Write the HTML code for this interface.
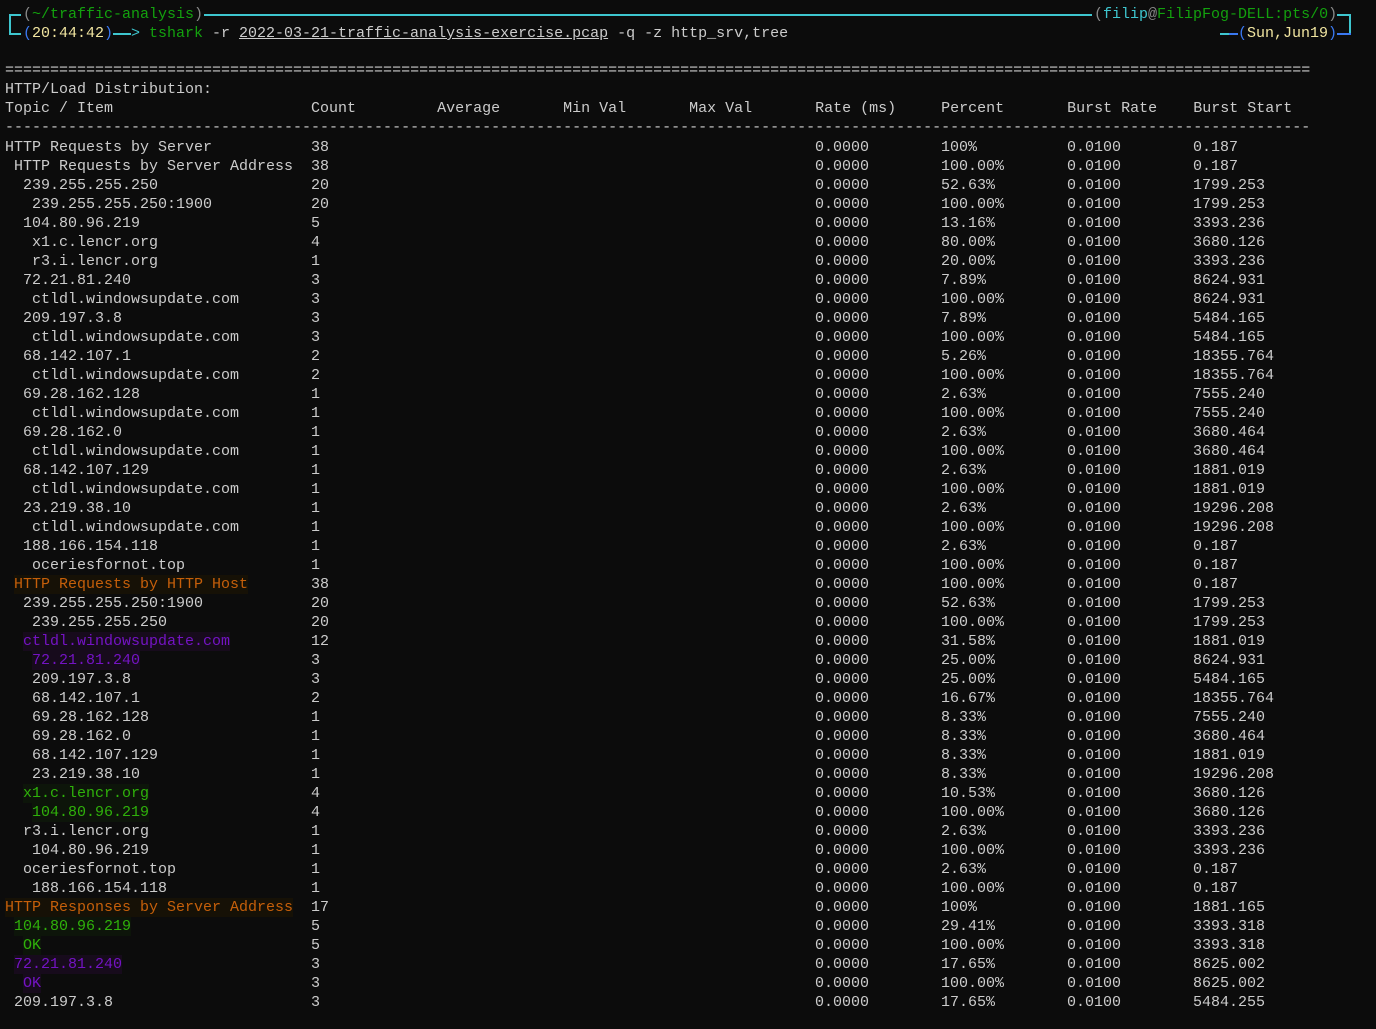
<!DOCTYPE html>
<html><head><meta charset="utf-8"><style>
html,body{margin:0;padding:0;background:#0c0c0c;width:1376px;height:1029px;overflow:hidden}
body{font-family:"Liberation Mono",monospace;font-size:15px;color:#cccccc;position:relative}
.l{position:absolute;left:5px;height:19px;line-height:19px;white-space:pre}
.r{height:19px;line-height:19px;white-space:pre}
.r span{display:inline-block;white-space:pre}
.n{width:306px}.c{width:504px}.m{width:126px}
#t{position:absolute;left:5px;top:138px}
.o{color:#c55f0a;background:#161106}
.g{color:#2fb10a;background:#0d150a}
.p{color:#7413c4;background:#170b1c}
.hl{position:absolute;background:#3ec6cf}
.hb{position:absolute;background:#3a78f0}
</style></head><body>
<div class="hl" style="left:9px;top:14px;width:2px;height:21px"></div>
<div class="hl" style="left:9px;top:14px;width:12px;height:2px"></div>
<div class="hl" style="left:9px;top:33px;width:12px;height:2px"></div>
<div class="hl" style="left:204px;top:14px;width:888px;height:2px"></div>
<div class="hl" style="left:1337px;top:14px;width:14px;height:2px"></div>
<div class="hl" style="left:1349px;top:14px;width:2px;height:21px"></div>
<div class="hb" style="left:1337px;top:33px;width:14px;height:2px"></div>
<div class="hl" style="left:1220px;top:33px;width:9px;height:2px"></div>
<div class="hb" style="left:1229px;top:33px;width:9px;height:2px"></div>
<div class="hl" style="left:113px;top:33px;width:18px;height:2px"></div>
<div class="l" style="top:5px;left:23px"><span style="color:#888">(</span><span style="color:#13a10e">~/traffic-analysis</span><span style="color:#888">)</span></div>
<div class="l" style="top:5px;left:1094px"><span style="color:#888">(</span><span style="color:#3ec6cf">filip</span><span style="color:#888">@</span><span style="color:#13a10e">FilipFog-DELL:pts/0</span><span style="color:#888">)</span></div>
<div class="l" style="top:24px;left:23px"><span style="color:#3a78f0">(</span><span style="color:#f1e5a0">20:44:42</span><span style="color:#3a78f0">)</span></div>
<div class="l" style="top:24px;left:131px;color:#3ec6cf">&gt;</div>
<div class="l" style="top:24px;left:149px"><span style="color:#13a10e">tshark</span> -r <u>2022-03-21-traffic-analysis-exercise.pcap</u> -q -z http_srv,tree</div>
<div class="l" style="top:24px;left:1238px"><span style="color:#3a78f0">(</span><span style="color:#f1e5a0">Sun,Jun19</span><span style="color:#3a78f0">)</span></div>
<div class="l" style="top:61px">=================================================================================================================================================</div>
<div class="l" style="top:80px">HTTP/Load Distribution:</div>
<div class="l" style="top:99px">Topic / Item                      Count         Average       Min Val       Max Val       Rate (ms)     Percent       Burst Rate    Burst Start</div>
<div class="l" style="top:118px">-------------------------------------------------------------------------------------------------------------------------------------------------</div>
<div id="t">
<div class="r"><span class="n">HTTP Requests by Server</span><span class="c">38</span><span class="m">0.0000</span><span class="m">100%</span><span class="m">0.0100</span><span>0.187</span></div>
<div class="r"><span class="n"> HTTP Requests by Server Address</span><span class="c">38</span><span class="m">0.0000</span><span class="m">100.00%</span><span class="m">0.0100</span><span>0.187</span></div>
<div class="r"><span class="n">  239.255.255.250</span><span class="c">20</span><span class="m">0.0000</span><span class="m">52.63%</span><span class="m">0.0100</span><span>1799.253</span></div>
<div class="r"><span class="n">   239.255.255.250:1900</span><span class="c">20</span><span class="m">0.0000</span><span class="m">100.00%</span><span class="m">0.0100</span><span>1799.253</span></div>
<div class="r"><span class="n">  104.80.96.219</span><span class="c">5</span><span class="m">0.0000</span><span class="m">13.16%</span><span class="m">0.0100</span><span>3393.236</span></div>
<div class="r"><span class="n">   x1.c.lencr.org</span><span class="c">4</span><span class="m">0.0000</span><span class="m">80.00%</span><span class="m">0.0100</span><span>3680.126</span></div>
<div class="r"><span class="n">   r3.i.lencr.org</span><span class="c">1</span><span class="m">0.0000</span><span class="m">20.00%</span><span class="m">0.0100</span><span>3393.236</span></div>
<div class="r"><span class="n">  72.21.81.240</span><span class="c">3</span><span class="m">0.0000</span><span class="m">7.89%</span><span class="m">0.0100</span><span>8624.931</span></div>
<div class="r"><span class="n">   ctldl.windowsupdate.com</span><span class="c">3</span><span class="m">0.0000</span><span class="m">100.00%</span><span class="m">0.0100</span><span>8624.931</span></div>
<div class="r"><span class="n">  209.197.3.8</span><span class="c">3</span><span class="m">0.0000</span><span class="m">7.89%</span><span class="m">0.0100</span><span>5484.165</span></div>
<div class="r"><span class="n">   ctldl.windowsupdate.com</span><span class="c">3</span><span class="m">0.0000</span><span class="m">100.00%</span><span class="m">0.0100</span><span>5484.165</span></div>
<div class="r"><span class="n">  68.142.107.1</span><span class="c">2</span><span class="m">0.0000</span><span class="m">5.26%</span><span class="m">0.0100</span><span>18355.764</span></div>
<div class="r"><span class="n">   ctldl.windowsupdate.com</span><span class="c">2</span><span class="m">0.0000</span><span class="m">100.00%</span><span class="m">0.0100</span><span>18355.764</span></div>
<div class="r"><span class="n">  69.28.162.128</span><span class="c">1</span><span class="m">0.0000</span><span class="m">2.63%</span><span class="m">0.0100</span><span>7555.240</span></div>
<div class="r"><span class="n">   ctldl.windowsupdate.com</span><span class="c">1</span><span class="m">0.0000</span><span class="m">100.00%</span><span class="m">0.0100</span><span>7555.240</span></div>
<div class="r"><span class="n">  69.28.162.0</span><span class="c">1</span><span class="m">0.0000</span><span class="m">2.63%</span><span class="m">0.0100</span><span>3680.464</span></div>
<div class="r"><span class="n">   ctldl.windowsupdate.com</span><span class="c">1</span><span class="m">0.0000</span><span class="m">100.00%</span><span class="m">0.0100</span><span>3680.464</span></div>
<div class="r"><span class="n">  68.142.107.129</span><span class="c">1</span><span class="m">0.0000</span><span class="m">2.63%</span><span class="m">0.0100</span><span>1881.019</span></div>
<div class="r"><span class="n">   ctldl.windowsupdate.com</span><span class="c">1</span><span class="m">0.0000</span><span class="m">100.00%</span><span class="m">0.0100</span><span>1881.019</span></div>
<div class="r"><span class="n">  23.219.38.10</span><span class="c">1</span><span class="m">0.0000</span><span class="m">2.63%</span><span class="m">0.0100</span><span>19296.208</span></div>
<div class="r"><span class="n">   ctldl.windowsupdate.com</span><span class="c">1</span><span class="m">0.0000</span><span class="m">100.00%</span><span class="m">0.0100</span><span>19296.208</span></div>
<div class="r"><span class="n">  188.166.154.118</span><span class="c">1</span><span class="m">0.0000</span><span class="m">2.63%</span><span class="m">0.0100</span><span>0.187</span></div>
<div class="r"><span class="n">   oceriesfornot.top</span><span class="c">1</span><span class="m">0.0000</span><span class="m">100.00%</span><span class="m">0.0100</span><span>0.187</span></div>
<div class="r"><span class="n"> <span class="o">HTTP Requests by HTTP Host</span></span><span class="c">38</span><span class="m">0.0000</span><span class="m">100.00%</span><span class="m">0.0100</span><span>0.187</span></div>
<div class="r"><span class="n">  239.255.255.250:1900</span><span class="c">20</span><span class="m">0.0000</span><span class="m">52.63%</span><span class="m">0.0100</span><span>1799.253</span></div>
<div class="r"><span class="n">   239.255.255.250</span><span class="c">20</span><span class="m">0.0000</span><span class="m">100.00%</span><span class="m">0.0100</span><span>1799.253</span></div>
<div class="r"><span class="n">  <span class="p">ctldl.windowsupdate.com</span></span><span class="c">12</span><span class="m">0.0000</span><span class="m">31.58%</span><span class="m">0.0100</span><span>1881.019</span></div>
<div class="r"><span class="n">   <span class="p">72.21.81.240</span></span><span class="c">3</span><span class="m">0.0000</span><span class="m">25.00%</span><span class="m">0.0100</span><span>8624.931</span></div>
<div class="r"><span class="n">   209.197.3.8</span><span class="c">3</span><span class="m">0.0000</span><span class="m">25.00%</span><span class="m">0.0100</span><span>5484.165</span></div>
<div class="r"><span class="n">   68.142.107.1</span><span class="c">2</span><span class="m">0.0000</span><span class="m">16.67%</span><span class="m">0.0100</span><span>18355.764</span></div>
<div class="r"><span class="n">   69.28.162.128</span><span class="c">1</span><span class="m">0.0000</span><span class="m">8.33%</span><span class="m">0.0100</span><span>7555.240</span></div>
<div class="r"><span class="n">   69.28.162.0</span><span class="c">1</span><span class="m">0.0000</span><span class="m">8.33%</span><span class="m">0.0100</span><span>3680.464</span></div>
<div class="r"><span class="n">   68.142.107.129</span><span class="c">1</span><span class="m">0.0000</span><span class="m">8.33%</span><span class="m">0.0100</span><span>1881.019</span></div>
<div class="r"><span class="n">   23.219.38.10</span><span class="c">1</span><span class="m">0.0000</span><span class="m">8.33%</span><span class="m">0.0100</span><span>19296.208</span></div>
<div class="r"><span class="n">  <span class="g">x1.c.lencr.org</span></span><span class="c">4</span><span class="m">0.0000</span><span class="m">10.53%</span><span class="m">0.0100</span><span>3680.126</span></div>
<div class="r"><span class="n">   <span class="g">104.80.96.219</span></span><span class="c">4</span><span class="m">0.0000</span><span class="m">100.00%</span><span class="m">0.0100</span><span>3680.126</span></div>
<div class="r"><span class="n">  r3.i.lencr.org</span><span class="c">1</span><span class="m">0.0000</span><span class="m">2.63%</span><span class="m">0.0100</span><span>3393.236</span></div>
<div class="r"><span class="n">   104.80.96.219</span><span class="c">1</span><span class="m">0.0000</span><span class="m">100.00%</span><span class="m">0.0100</span><span>3393.236</span></div>
<div class="r"><span class="n">  oceriesfornot.top</span><span class="c">1</span><span class="m">0.0000</span><span class="m">2.63%</span><span class="m">0.0100</span><span>0.187</span></div>
<div class="r"><span class="n">   188.166.154.118</span><span class="c">1</span><span class="m">0.0000</span><span class="m">100.00%</span><span class="m">0.0100</span><span>0.187</span></div>
<div class="r"><span class="n"><span class="o">HTTP Responses by Server Address</span></span><span class="c">17</span><span class="m">0.0000</span><span class="m">100%</span><span class="m">0.0100</span><span>1881.165</span></div>
<div class="r"><span class="n"> <span class="g">104.80.96.219</span></span><span class="c">5</span><span class="m">0.0000</span><span class="m">29.41%</span><span class="m">0.0100</span><span>3393.318</span></div>
<div class="r"><span class="n">  <span class="g">OK</span></span><span class="c">5</span><span class="m">0.0000</span><span class="m">100.00%</span><span class="m">0.0100</span><span>3393.318</span></div>
<div class="r"><span class="n"> <span class="p">72.21.81.240</span></span><span class="c">3</span><span class="m">0.0000</span><span class="m">17.65%</span><span class="m">0.0100</span><span>8625.002</span></div>
<div class="r"><span class="n">  <span class="p">OK</span></span><span class="c">3</span><span class="m">0.0000</span><span class="m">100.00%</span><span class="m">0.0100</span><span>8625.002</span></div>
<div class="r"><span class="n"> 209.197.3.8</span><span class="c">3</span><span class="m">0.0000</span><span class="m">17.65%</span><span class="m">0.0100</span><span>5484.255</span></div>
</div>
</body></html>
